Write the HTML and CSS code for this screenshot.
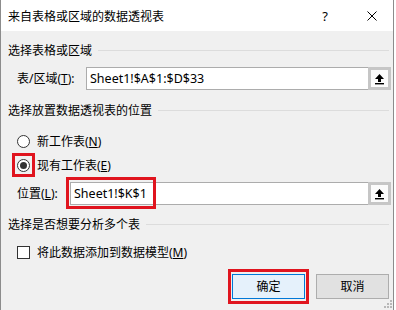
FILE: index.html
```html
<!DOCTYPE html>
<html lang="zh-CN">
<head>
    <meta charset="UTF-8">
    <title>来自表格或区域的数据透视表</title>
    <link rel="stylesheet" href="styles.css">
</head>
<body>
    <div class="dialog">
        <div class="titlebar">
            <span class="title">来自表格或区域的数据透视表</span>
            <span class="help">?</span>
            <svg class="close" width="10" height="10" viewBox="0 0 10 10">
                <path d="M0.5 0.5 L9.5 9.5 M9.5 0.5 L0.5 9.5" stroke="#000" stroke-width="1" fill="none"/>
            </svg>
        </div>

        <div class="content">
            <div class="group-head group-first"><span>选择表格或区域</span><i></i></div>
            <div class="field-row">
                <label class="field-label label-range">表/区域(<u>T</u>):</label>
                <div class="input-box"><span>Sheet1!$A$1:$D$33</span></div>
                <div class="pick-btn">
                    <svg width="11" height="12" viewBox="0 0 11 12">
                        <path d="M5.5 1 L10 6 L7 6 L7 9 L4 9 L4 6 L1 6 Z" fill="#000"/>
                        <rect x="1" y="10" width="9" height="1.4" fill="#000"/>
                    </svg>
                </div>
            </div>

            <div class="group-head group-second"><span>选择放置数据透视表的位置</span><i></i></div>
            <div class="option-row option-first">
                <span class="radio"></span>
                <span>新工作表(<u>N</u>)</span>
            </div>
            <div class="option-row option-second">
                <span class="radio checked"><span class="mark mark-radio"></span></span>
                <span>现有工作表(<u>E</u>)</span>
            </div>
            <div class="field-row field-location">
                <label class="field-label label-location">位置(<u>L</u>):</label>
                <div class="input-box">
                    <span>Sheet1!$K$1</span>
                    <span class="mark mark-input"></span>
                </div>
                <div class="pick-btn">
                    <svg width="11" height="12" viewBox="0 0 11 12">
                        <path d="M5.5 1 L10 6 L7 6 L7 9 L4 9 L4 6 L1 6 Z" fill="#000"/>
                        <rect x="1" y="10" width="9" height="1.4" fill="#000"/>
                    </svg>
                </div>
            </div>

            <div class="group-head group-third"><span>选择是否想要分析多个表</span><i></i></div>
            <div class="option-row option-check">
                <span class="checkbox"></span>
                <span>将此数据添加到数据模型(<u>M</u>)</span>
            </div>

            <div class="buttons">
                <div class="btn btn-default">确定<span class="mark mark-btn"></span></div>
                <div class="btn">取消</div>
            </div>
        </div>

        <svg class="grip" width="8" height="8" viewBox="0 0 8 8">
            <rect x="6" y="0" width="2" height="2" fill="#b8b8b8"/>
            <rect x="3" y="3" width="2" height="2" fill="#b8b8b8"/>
            <rect x="6" y="3" width="2" height="2" fill="#b8b8b8"/>
            <rect x="0" y="6" width="2" height="2" fill="#b8b8b8"/>
            <rect x="3" y="6" width="2" height="2" fill="#b8b8b8"/>
            <rect x="6" y="6" width="2" height="2" fill="#b8b8b8"/>
        </svg>
    </div>
</body>
</html>
```

FILE: styles.css
```css
body {
    margin: 0;
    background: #ffffff;
    font-family: "Noto Sans", "Noto Sans CJK SC", sans-serif;
    font-size: 12px;
    color: #000;
}
.dialog {
    position: relative;
    width: 392px;
    height: 310px;
    border-left: 1px solid #8c8c8c;
    border-right: 1px solid #8c8c8c;
    background: #f0f0f0;
    overflow: hidden;
}
.titlebar {
    height: 31px;
    background: #fff;
    display: flex;
    align-items: center;
    padding-left: 7px;
}
.title {
    flex: 1;
    font-size: 12px;
}
.help {
    font-size: 13px;
    margin-right: 39px;
}
.close {
    margin-right: 16px;
}
.content {
    padding: 0 2px 0 7px;
}
.group-head {
    display: flex;
    align-items: center;
    height: 17px;
    line-height: 17px;
    margin-right: 2px;
}
.group-head i {
    flex: 1;
    height: 1px;
    background: #dcdcdc;
    margin-left: 6px;
}
.group-first { margin-top: 11px; }
.group-second { margin-top: 12px; }
.group-third { margin-top: 11px; }

.field-row {
    display: flex;
    align-items: center;
    height: 23px;
    margin-top: 8px;
    padding-left: 9px;
}
.field-label { line-height: 23px; }
.label-range { width: 69px; }
.label-location { width: 53px; }
.input-box {
    position: relative;
    flex: 1;
    height: 21px;
    border: 1px solid #acacac;
    border-right: none;
    background: #fff;
    display: flex;
    align-items: center;
    padding-left: 3px;
    font-size: 12.5px;
}
.pick-btn {
    width: 17px;
    height: 17px;
    border: 3px solid #c6c6c6;
    background: #fbfbfb;
    display: flex;
    align-items: center;
    justify-content: center;
}

.option-row {
    display: flex;
    align-items: center;
    padding-left: 9px;
    height: 20px;
}
.option-first { margin-top: 12px; }
.option-second { margin-top: 4px; }
.field-location { margin-top: 7px; }
.option-check { margin-top: 9px; }

.radio {
    position: relative;
    box-sizing: border-box;
    width: 13px;
    height: 13px;
    border: 1px solid #333;
    border-radius: 50%;
    background: #fff;
    margin-right: 7px;
}
.radio.checked::after {
    content: "";
    position: absolute;
    left: 2px;
    top: 2px;
    width: 7px;
    height: 7px;
    border-radius: 50%;
    background: #333;
}
.checkbox {
    box-sizing: border-box;
    width: 13px;
    height: 13px;
    border: 1px solid #333;
    background: #fff;
    margin-right: 7px;
}

.buttons {
    display: flex;
    justify-content: flex-end;
    gap: 11px;
    margin-top: 12px;
    padding-right: 2px;
}
.btn {
    position: relative;
    box-sizing: border-box;
    width: 73px;
    height: 25px;
    line-height: 23px;
    text-align: center;
    border: 1px solid #adadad;
    background: #e1e1e1;
}
.btn-default {
    border-color: #0078d7;
    background: #e5f1fb;
    box-shadow: inset 0 0 0 1px #e5f1fb;
}

/* red highlight frames */
.mark {
    position: absolute;
    box-sizing: border-box;
    border: 3px solid #e0141e;
}
.mark-radio {
    left: -6px;
    top: -7px;
    width: 23px;
    height: 24px;
}
.mark-input {
    left: -5px;
    top: -6px;
    width: 90px;
    height: 32px;
}
.mark-btn {
    left: -5px;
    top: -6px;
    width: 81px;
    height: 35px;
}
.grip {
    position: absolute;
    right: 1px;
    bottom: 2px;
}
```
